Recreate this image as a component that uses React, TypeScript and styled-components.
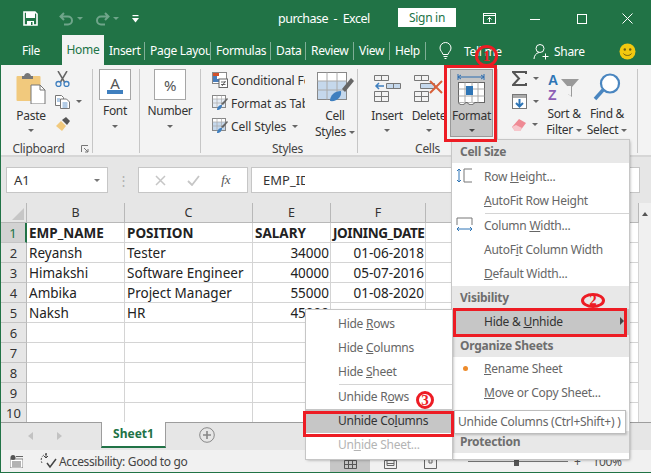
import React from 'react';
import styled, { createGlobalStyle } from 'styled-components';

const GlobalStyle = createGlobalStyle`
  html, body { margin: 0; padding: 0; background: #fff; }
  body { font-family: "Noto Sans", "Open Sans", sans-serif; font-size: 13px; color: #333; }
  svg { display: block; flex: none; }
`;

const Arrow = styled.span<{ $color?: string; $top?: number }>`
  display: inline-block;
  width: 0;
  height: 0;
  flex: none;
  margin-top: ${p => p.$top || 0}px;
  border-left: 3.5px solid transparent;
  border-right: 3.5px solid transparent;
  border-top: 3.5px solid ${p => p.$color || '#666'};
`;

/* title bar */
const Window = styled.div`
  position: relative;
  width: 651px;
  height: 473px;
  overflow: hidden;
  box-sizing: border-box;
  border-left: 1px solid #217346;
  border-bottom: 1px solid #217346;
  display: flex;
  flex-direction: column;
`;
const TitleBar = styled.div`
  height: 37px;
  margin-left: -1px;
  background: #217346;
  color: #fff;
  display: flex;
  align-items: center;
  flex: none;
`;
const TitleCell = styled.div<{ $w: number }>`
  width: ${p => p.$w}px;
  flex: none;
  display: flex;
  align-items: center;
  justify-content: center;
  gap: 3px;
`;
const DocTitle = styled.div`
  width: 125px;
  padding-left: 30px;
  box-sizing: border-box;
  font-size: 12.5px;
  letter-spacing: -0.5px;
  white-space: pre;
  flex: none;
`;
const SignIn = styled.div`
  width: 58px;
  height: 19px;
  margin: 0 3px 2px 25px;
  background: #fff;
  color: #217346;
  font-size: 12px;
  letter-spacing: -0.3px;
  line-height: 19px;
  text-align: center;
  flex: none;
`;

/* tabs */
const TabBar = styled.div`
  height: 28px;
  margin-left: -1px;
  background: #217346;
  display: flex;
  align-items: center;
  flex: none;
  color: #fff;
  font-size: 12px;
  letter-spacing: -0.3px;
`;
const Tab = styled.div<{ $w: number; $active?: boolean; $sep?: boolean }>`
  width: ${p => p.$w}px;
  box-sizing: border-box;
  flex: none;
  height: ${p => (p.$active ? '30px' : '18px')};
  margin-top: ${p => (p.$active ? '-2px' : '0')};
  line-height: ${p => (p.$active ? '30px' : '18px')};
  text-align: ${p => (p.$sep ? 'left' : 'center')};
  padding-left: ${p => (p.$sep ? '5px' : '0')};
  overflow: hidden;
  white-space: nowrap;
  background: ${p => (p.$active ? '#f3f3f3' : 'transparent')};
  color: ${p => (p.$active ? '#217346' : '#fff')};
  border-right: ${p => (p.$sep ? '1px solid #7fae96' : 'none')};
`;
const TabExtra = styled.div<{ $w: number }>`
  width: ${p => p.$w}px;
  flex: none;
  display: flex;
  align-items: center;
  gap: 5px;
  white-space: nowrap;
`;

/* ribbon */
const Ribbon = styled.div`
  height: 92px;
  background: #f3f3f3;
  border-bottom: 2px solid #d6d6d6;
  box-sizing: border-box;
  display: flex;
  flex: none;
  padding-top: 4px;
  font-size: 12px;
  letter-spacing: -0.3px;
`;
const Group = styled.div<{ $w: number; $last?: boolean }>`
  width: ${p => p.$w}px;
  height: 84px;
  flex: none;
  box-sizing: border-box;
  border-right: ${p => (p.$last ? 'none' : '1px solid #c6c6c6')};
  display: flex;
  flex-direction: column;
`;
const GroupBody = styled.div<{ $pad?: number; $gap?: number }>`
  flex: 1;
  display: flex;
  min-height: 0;
  padding-left: ${p => p.$pad || 0}px;
  gap: ${p => p.$gap || 0}px;
`;
const GroupLabel = styled.div<{ $left?: number; $right?: number }>`
  height: 14px;
  line-height: 20px;
  text-align: center;
  font-size: 12px;
  color: #444;
  position: relative;
  padding-left: ${p => p.$left || 0}px;
  padding-right: ${p => p.$right || 0}px;
`;
const Launcher = styled.span`
  position: absolute;
  right: 3px;
  top: 6px;
`;
const BigButton = styled.div<{ $w: number; $on?: boolean }>`
  width: ${p => p.$w}px;
  height: 68px;
  flex: none;
  box-sizing: border-box;
  background: ${p => (p.$on ? '#c6c6c6' : 'transparent')};
  border: 1px solid ${p => (p.$on ? '#9a9a9a' : 'transparent')};
  display: flex;
  flex-direction: column;
  align-items: center;
  line-height: 16px;
  text-align: center;
  white-space: nowrap;
  padding-top: 3px;
`;
const IconSlot = styled.div<{ $shift?: number }>`
  height: 30px;
  margin-bottom: 5px;
  margin-left: ${p => p.$shift || 0}px;
  display: flex;
  align-items: center;
  justify-content: center;
`;
const ClosedBox = styled.div`
  width: 32px;
  height: 31px;
  margin: -4px 0 3px;
  box-sizing: border-box;
  border: 1px solid #a6a6a6;
  background: #fff;
  display: flex;
  flex-direction: column;
  align-items: center;
  justify-content: center;
  font-size: 15px;
  color: #555;
`;
const ColorBar = styled.span`
  width: 16px;
  height: 4px;
  background: #3f7fbf;
`;
const FontLetter = styled.span`
  line-height: 14px;
`;
const SmallStack = styled.div<{ $w?: number }>`
  display: flex;
  flex-direction: column;
  gap: 8px;
  padding-top: 2px;
  ${p => (p.$w ? `width: ${p.$w}px;` : '')}
`;
const SmallRow = styled.div`
  display: flex;
  align-items: center;
  gap: 6px;
  height: 15px;
`;
const StyleList = styled.div`
  width: 93px;
  margin-right: 10px;
  padding-top: 1px;
  flex: none;
  display: flex;
  flex-direction: column;
  gap: 3px;
  overflow: hidden;
  font-size: 12px;
  letter-spacing: -0.1px;
`;
const StyleRow = styled.div`
  height: 20px;
  display: flex;
  align-items: center;
  gap: 3px;
  white-space: nowrap;
`;
const SmallArrow = styled(Arrow)`
  margin-left: 3px;
  vertical-align: 2px;
`;

/* formula bar */
const FormulaBar = styled.div`
  height: 46px;
  flex: none;
  background: #e6e6e6;
  box-sizing: border-box;
  padding: 10px 11px 0 5px;
  display: flex;
  align-items: flex-start;
`;
const InputBox = styled.div<{ $w?: number }>`
  height: 26px;
  box-sizing: border-box;
  border: 1px solid #c6c6c6;
  background: #fff;
  ${p => (p.$w ? `width: ${p.$w}px; flex: none;` : 'flex: 1;')}
  display: flex;
  align-items: center;
  font-size: 13px;
`;
const NameBox = styled(InputBox)`
  justify-content: space-between;
  padding: 0 7px;
`;
const FxBox = styled(InputBox)`
  justify-content: space-around;
  margin-right: 3px;
  padding: 0 6px;
`;
const FxLabel = styled.i`
  font-family: "Liberation Serif", serif;
  color: #555;
`;
const FormulaText = styled(InputBox)`
  padding-left: 11px;
`;
const FormulaValue = styled.span`
  width: 42px;
  overflow: hidden;
  white-space: nowrap;
`;
const Dots = styled.div`
  width: 30px;
  flex: none;
  height: 26px;
  color: #b0b0b0;
  font-size: 13px;
  line-height: 26px;
  text-align: center;
`;

/* sheet */
const SheetArea = styled.div`
  height: 219px;
  flex: none;
  display: flex;
  overflow: hidden;
  background: #fff;
`;
const Sheet = styled.div`
  flex: 1;
  display: grid;
  grid-template-columns: 26px 98px 128px 78px 95px 1fr;
  grid-auto-rows: 20px;
  font-size: 13.5px;
  color: #222;
  align-content: start;
`;
const Corner = styled.div`
  background: #e6e6e6;
  border-right: 1px solid #b8b8b8;
  border-bottom: 1px solid #b8b8b8;
  position: relative;
  &::after {
    content: '';
    position: absolute;
    right: 2px;
    bottom: 2px;
    border-left: 12px solid transparent;
    border-bottom: 12px solid #c6c6c6;
  }
`;
const ColHead = styled.div`
  background: #e6e6e6;
  border-right: 1px solid #b8b8b8;
  border-bottom: 1px solid #b8b8b8;
  text-align: center;
  line-height: 20px;
  font-size: 12.5px;
  color: #333;
`;
const RowHead = styled.div<{ $on?: boolean }>`
  background: ${p => (p.$on ? '#d2d2d2' : '#e6e6e6')};
  color: ${p => (p.$on ? '#217346' : '#333')};
  border-right: ${p => (p.$on ? '2px solid #217346' : '1px solid #b8b8b8')};
  border-bottom: 1px solid #c4c4c4;
  text-align: center;
  line-height: 21px;
  font-size: 13px;
  box-sizing: border-box;
`;
const Cell = styled.div<{ $bold?: boolean; $right?: boolean; $tight?: boolean }>`
  border-right: 1px solid #d4d4d4;
  border-bottom: 1px solid #d4d4d4;
  box-sizing: border-box;
  padding: 0 1px 0 2px;
  line-height: 21px;
  white-space: nowrap;
  overflow: hidden;
  font-weight: ${p => (p.$bold ? 700 : 400)};
  text-align: ${p => (p.$right ? 'right' : 'left')};
  letter-spacing: ${p => (p.$tight ? '-0.4px' : '0')};
`;
const ScrollBar = styled.div`
  width: 12px;
  flex: none;
  background: #f0f0f0;
  display: flex;
  justify-content: center;
  padding-top: 9px;
  box-sizing: border-box;
`;
const UpArrow = styled.span`
  width: 0;
  height: 0;
  border-left: 3px solid transparent;
  border-right: 3px solid transparent;
  border-bottom: 4px solid #555;
`;

/* sheet tabs + status */
const SheetTabs = styled.div`
  height: 28px;
  flex: none;
  background: #e6e6e6;
  border-top: 1px solid #9d9d9d;
  box-sizing: border-box;
  display: flex;
  align-items: flex-start;
`;
const NavArrows = styled.div`
  width: 100px;
  flex: none;
  height: 25px;
  display: flex;
  align-items: center;
  gap: 24px;
  padding-left: 27px;
  box-sizing: border-box;
`;
const NavArrow = styled.span<{ $left?: boolean }>`
  width: 0;
  height: 0;
  border-top: 4px solid transparent;
  border-bottom: 4px solid transparent;
  ${p => (p.$left ? 'border-right: 5px solid #c2c2c2;' : 'border-left: 5px solid #c2c2c2;')}
`;
const SheetTab = styled.div`
  width: 65px;
  height: 26px;
  margin-top: -1px;
  flex: none;
  box-sizing: border-box;
  background: #fff;
  border-left: 1px solid #9d9d9d;
  border-right: 1px solid #9d9d9d;
  border-bottom: 2px solid #217346;
  color: #217346;
  font-weight: 700;
  font-size: 12px;
  line-height: 24px;
  text-align: center;
`;
const AddSheet = styled.div`
  margin: 4px 0 0 33px;
`;
const StatusBar = styled.div`
  flex: 1;
  background: #f1f1f1;
  display: flex;
  align-items: center;
  font-size: 12px;
  letter-spacing: -0.35px;
  color: #444;
  padding-left: 9px;
`;
const StatusText = styled.div`
  display: flex;
  align-items: center;
  gap: 2px;
  margin-left: 17px;
  white-space: nowrap;
  width: 290px;
  flex: none;
`;
const ViewButton = styled.div<{ $on?: boolean }>`
  width: 40px;
  height: 21px;
  flex: none;
  background: ${p => (p.$on ? '#c6c6c6' : 'transparent')};
  display: flex;
  align-items: flex-end;
  justify-content: center;
  padding-bottom: 3px;
  box-sizing: border-box;
`;
const ZoomGroup = styled.div`
  display: flex;
  align-items: center;
  margin-left: 18px;
  font-size: 12px;
  color: #555;
`;
const Slider = styled.div`
  width: 100px;
  height: 1px;
  margin: 0 6px 0 0;
  background: #777;
  position: relative;
`;
const Thumb = styled.span`
  position: absolute;
  left: 46px;
  top: -4px;
  width: 5px;
  height: 9px;
  background: #555;
`;
const ZoomValue = styled.div`
  margin-left: 12px;
`;

/* menus */
const Menu = styled.div`
  position: absolute;
  background: #fff;
  box-shadow: 1px 1px 3px rgba(0, 0, 0, 0.35);
  outline: 1px solid #c6c6c6;
  overflow: hidden;
  font-size: 12px;
  letter-spacing: -0.25px;
  color: #666;
`;
const FormatMenu = styled(Menu)`
  left: 451px;
  top: 140px;
  width: 177px;
  height: 319px;
`;
const UnhideMenu = styled(Menu)`
  left: 305px;
  top: 310px;
  width: 146px;
  height: 149px;
  padding-top: 2px;
  box-sizing: border-box;
`;
const MenuHead = styled.div<{ $h?: number }>`
  height: ${p => p.$h || 22}px;
  line-height: ${p => p.$h || 22}px;
  background: #e8e8e8;
  font-weight: 700;
  padding-left: 8px;
  color: #6e6e6e;
`;
const MenuItem = styled.div<{ $on?: boolean; $off?: boolean; $h?: number }>`
  position: relative;
  height: ${p => p.$h || 24}px;
  line-height: ${p => p.$h || 24}px;
  padding-left: 32px;
  white-space: nowrap;
  background: ${p => (p.$on ? '#c6c6c6' : 'transparent')};
  color: ${p => (p.$off ? '#b4b4b4' : p.$on ? '#333' : '#666')};
`;
const MenuSep = styled.div`
  height: 1px;
  margin-left: 33px;
  background: #d4d4d4;
`;
const MenuGap = styled.div<{ $h: number }>`
  height: ${p => p.$h}px;
`;
const MenuIcon = styled.span`
  position: absolute;
  left: 4px;
  top: 3px;
`;
const SubArrow = styled.span`
  position: absolute;
  right: 5px;
  top: 8px;
  border-top: 4px solid transparent;
  border-bottom: 4px solid transparent;
  border-left: 4px solid #444;
`;
const Dot = styled.span`
  position: absolute;
  left: 11px;
  top: 9px;
  width: 5px;
  height: 5px;
  border-radius: 50%;
  background: #ed8b2b;
`;
const Tooltip = styled.div`
  position: absolute;
  left: 453px;
  top: 410px;
  width: 172px;
  height: 24px;
  box-sizing: border-box;
  background: #fff;
  border: 1px solid #bdbdbd;
  box-shadow: 1px 1px 2px rgba(0, 0, 0, 0.2);
  font-size: 12px;
  letter-spacing: -0.25px;
  line-height: 22px;
  padding-left: 3px;
  color: #666;
  white-space: nowrap;
  overflow: hidden;
`;

/* red call-outs drawn on top of the screenshot */
const RedBox = styled.div<{ $x: number; $y: number; $w: number; $h: number }>`
  position: absolute;
  left: ${p => p.$x}px;
  top: ${p => p.$y}px;
  width: ${p => p.$w}px;
  height: ${p => p.$h}px;
  box-sizing: border-box;
  border: 3px solid #ed1c24;
`;
const Badge = styled.div<{ $x: number; $y: number; $w: number; $h: number; $fill?: boolean }>`
  position: absolute;
  left: ${p => p.$x}px;
  top: ${p => p.$y}px;
  width: ${p => p.$w}px;
  height: ${p => p.$h}px;
  box-sizing: border-box;
  border: 3px solid #ed1c24;
  border-radius: 50%;
  background: ${p => (p.$fill ? '#fff' : 'transparent')};
  color: #ed1c24;
  font-family: "Liberation Serif", serif;
  font-weight: 700;
  font-size: 15px;
  line-height: ${p => p.$h - 6}px;
  text-align: center;
`;

const SaveIcon = () => (
  <svg width="15" height="15" viewBox="0 0 15 15">
    <path d="M1 1h11l2 2v11H1z" fill="none" stroke="#fff" strokeWidth="1.6" />
    <rect x="3" y="1" width="9" height="6" fill="#fff" />
    <rect x="4" y="10" width="7" height="4" fill="#fff" />
    <rect x="8" y="11" width="1.5" height="3" fill="#217346" />
  </svg>
);
const UndoIcon = ({ flip }: { flip?: boolean }) => (
  <svg width="15" height="14" viewBox="0 0 15 14">
    <path
      d="M5 1 1.5 4.5 5 8M2 4.5h7a4 4 0 0 1 0 8H5"
      fill="none"
      stroke="#6fa58a"
      strokeWidth="2"
      transform={flip ? 'matrix(-1 0 0 1 15 0)' : undefined}
    />
  </svg>
);
const QuickIcon = () => (
  <svg width="7" height="8" viewBox="0 0 7 8">
    <rect x="0.5" y="0" width="6" height="1.2" fill="#fff" />
    <path d="M0 3h7L3.5 7.5z" fill="#fff" />
  </svg>
);
const DisplayIcon = () => (
  <svg width="13" height="11" viewBox="0 0 13 11">
    <rect x="0.5" y="0.5" width="12" height="10" fill="none" stroke="#fff" />
    <path d="M0.5 2.5h12M6.5 9V4.500M4.500 6.500l2-2 2 2" fill="none" stroke="#fff" />
  </svg>
);
const MinIcon = () => (
  <svg width="12" height="10" viewBox="0 0 12 10">
    <path d="M1 5.500h10" stroke="#fff" />
  </svg>
);
const MaxIcon = () => (
  <svg width="10" height="10" viewBox="0 0 10 10">
    <rect x="0.5" y="0.5" width="9" height="9" fill="none" stroke="#fff" />
  </svg>
);
const CloseIcon = () => (
  <svg width="11" height="11" viewBox="0 0 11 11">
    <path d="M0.5 0.5l10 10M10.5 0.5l-10 10" stroke="#fff" />
  </svg>
);
const BulbIcon = () => (
  <svg width="13" height="18" viewBox="0 0 13 18">
    <path d="M4 12.500C3.500 10 1 9 1 6a5.500 5.500 0 0 1 11 0c0 3-2.500 4-3 6.500z" fill="none" stroke="#fff" />
    <path d="M4.500 14.500h4M5.500 16.500h2" stroke="#fff" />
  </svg>
);
const PersonIcon = () => (
  <svg width="16" height="17" viewBox="0 0 16 17">
    <circle cx="7" cy="5.500" r="4" fill="none" stroke="#fff" />
    <path d="M1 16c0-3 2-6 5-6.500M9.500 13.500h6M12.500 10.500v6" fill="none" stroke="#fff" />
  </svg>
);
const Smiley = () => (
  <svg width="17" height="17" viewBox="0 0 17 17">
    <circle cx="8.500" cy="8.500" r="8" fill="#f2c80f" />
    <circle cx="5.800" cy="6.500" r="1.200" fill="#6b5a10" />
    <circle cx="11.200" cy="6.500" r="1.200" fill="#6b5a10" />
    <path d="M4.500 10.500c1.500 2.600 6.500 2.600 8 0" fill="none" stroke="#6b5a10" />
  </svg>
);
const PasteIcon = () => (
  <svg width="30" height="31" viewBox="0 0 30 31">
    <rect x="0.500" y="3" width="24" height="25" rx="1" fill="#f1c97d" />
    <path d="M8 3c1-4 6-4 7 0h2v3H6V3z" fill="#777" />
    <path d="M15 12h9l5 5v14H15z" fill="#fff" stroke="#777" />
    <path d="M24 12v5h5" fill="none" stroke="#777" />
  </svg>
);
const ScissorsIcon = () => (
  <svg width="15" height="16" viewBox="0 0 15 16">
    <path d="M3 0l6.500 11M12 0L5.500 11" stroke="#666" strokeWidth="1.500" />
    <circle cx="3.500" cy="13" r="2.500" fill="none" stroke="#3f7fbf" strokeWidth="1.300" />
    <circle cx="11.500" cy="13" r="2.500" fill="none" stroke="#3f7fbf" strokeWidth="1.300" />
  </svg>
);
const CopyIcon = () => (
  <svg width="15" height="14" viewBox="0 0 15 14">
    <path d="M0.500 0.500h6l2 2v8h-8z" fill="#fff" stroke="#777" />
    <path d="M5.500 4h6l3 3v6.500h-9z" fill="#fff" stroke="#777" />
    <path d="M7.500 8h5M7.500 10h5M7.500 12h5M2 4h3M2 6h3" stroke="#3f7fbf" strokeWidth="0.800" />
  </svg>
);
const BrushIcon = () => (
  <svg width="16" height="15" viewBox="0 0 16 15">
    <path d="M1 9l5-5 5 5-4 5z" fill="#f1c97d" />
    <path d="M7 3l4-3 4 4-3 4z" fill="#555" />
  </svg>
);
const Launch = () => (
  <svg width="8" height="8" viewBox="0 0 8 8">
    <path d="M0.500 7V0.500H7M3 3l4 4M7 4v3H4" fill="none" stroke="#777" />
  </svg>
);
const CondIcon = () => (
  <svg width="16" height="16" viewBox="0 0 16 16">
    <rect x="0.500" y="0.500" width="14" height="11" fill="#fff" stroke="#888" />
    <rect x="1" y="1" width="6" height="3" fill="#d2502a" />
    <rect x="1" y="4" width="4" height="3" fill="#4a7ebb" />
    <rect x="1" y="7" width="6" height="3" fill="#4a7ebb" />
    <rect x="7" y="7" width="8.500" height="8.500" fill="#fff" stroke="#666" />
    <path d="M9 10h4.500M9 12.500h4.500M10 14l3.500-5" stroke="#444" strokeWidth="0.800" />
  </svg>
);
const TableIcon = ({ fill }: { fill: string }) => (
  <svg width="16" height="16" viewBox="0 0 16 16">
    <rect x="0.500" y="0.500" width="13" height="12" fill="#fff" stroke="#888" />
    <rect x="1" y="4" width="12" height="8" fill={fill} />
    <path d="M0.500 4h13M0.500 8h13M5 0.500v12M9.500 0.500v12" stroke="#aaa" strokeWidth="0.700" />
    <path d="M9 9l6-6 1 1-5 6z" fill="#666" />
    <path d="M5 15c0-3 2-5 5-5 0 3-2 5-5 5z" fill="#3f7fbf" />
  </svg>
);
const CellStylesIcon = () => (
  <svg width="37" height="32" viewBox="0 0 37 32">
    <rect x="0.500" y="0.500" width="29" height="27" fill="#fff" stroke="#888" />
    <rect x="1" y="9" width="28" height="18" fill="#c5d8ec" />
    <path d="M0.500 9h29M0.500 18h29M10 0.500v27M20 0.500v27" stroke="#aaa" />
    <path d="M25 17L34 6l3 3-9 11z" fill="#666" />
    <path d="M13 29c0-6 5-10 11-10 1 6-4 11-11 10z" fill="#3f7fbf" />
  </svg>
);
const InsertIcon = () => (
  <svg width="27" height="27" viewBox="0 0 27 27">
    <path d="M0.500 0.500h14v5h-14zM7.500 0.500v5M0.500 16.500h14v10h-14zM0.500 21.500h14M7.500 16.500v10" fill="none" stroke="#777" />
    <path d="M12.500 8.500h14v5h-14zM19.500 8.500v5" fill="#c5d8ec" stroke="#777" />
    <path d="M10 11H2M5 8l-3 3 3 3" fill="none" stroke="#3f7fbf" strokeWidth="1.500" />
  </svg>
);
const DeleteIcon = () => (
  <svg width="30" height="27" viewBox="0 0 30 27">
    <path d="M0.500 0.500h14v5h-14zM7.500 0.500v5M0.500 16.500h14v10h-14zM0.500 21.500h14M7.500 16.500v10" fill="none" stroke="#777" />
    <path d="M6.500 8.500h14v5h-14z" fill="#c5d8ec" stroke="#777" />
    <path d="M16 6l12 12M28 6L16 18" stroke="#d8603a" strokeWidth="2" />
  </svg>
);
const FormatIcon = () => (
  <svg width="30" height="33" viewBox="0 0 30 33">
    <path d="M1 5h26M1 2v6M27 2v6M4 3L1 5l3 2M24 3l3 2-3 2" fill="none" stroke="#2b6cb0" />
    <rect x="1.500" y="10.500" width="26" height="20" fill="#fff" stroke="#666" />
    <path d="M8 10.500v20M21 10.500v20M1.500 17h26M1.500 24h26M15 10.500v20" stroke="#aaa" />
    <rect x="9" y="14" width="7" height="9" fill="#2e75b6" />
    <path d="M1 30.500c3 3 5 3 8 0M10 30.500c3 3 5 3 8 0" fill="#fff" stroke="#666" />
  </svg>
);
const SigmaIcon = () => (
  <svg width="15" height="15" viewBox="0 0 15 15">
    <path d="M14 3V1H1l6 6.500L1 14h13v-2" fill="none" stroke="#555" strokeWidth="2" />
  </svg>
);
const FillIcon = () => (
  <svg width="15" height="15" viewBox="0 0 15 15">
    <rect x="0.500" y="0.500" width="14" height="14" fill="#fff" stroke="#777" />
    <rect x="1" y="1" width="13" height="3" fill="#aaa" />
    <path d="M7.500 5v7M4 9l3.500 3.500L11 9" fill="none" stroke="#2e75b6" strokeWidth="2" />
  </svg>
);
const EraserIcon = () => (
  <svg width="14" height="12" viewBox="0 0 14 12">
    <path d="M0 8l7-8 7 4-6 8H3z" fill="#ef8a94" />
    <path d="M0 8l3 4h5l2-3-6-3z" fill="#f7c6cb" />
  </svg>
);
const SortIcon = () => (
  <svg width="32" height="28" viewBox="0 0 32 28">
    <text x="0" y="12" fontFamily="Liberation Sans, sans-serif" fontWeight="700" fontSize="14" fill="#2e75b6">A</text>
    <text x="0" y="27" fontFamily="Liberation Sans, sans-serif" fontWeight="700" fontSize="14" fill="#8e5fb5">Z</text>
    <path d="M13 6h18l-7 8v10l-4-3v-7z" fill="#9a9a9a" />
    <path d="M19 13l1 8 3 2V13z" fill="#f3f3f3" />
  </svg>
);
const FindIcon = () => (
  <svg width="28" height="28" viewBox="0 0 28 28">
    <circle cx="17" cy="10.500" r="9" fill="#fff" stroke="#4a86c0" strokeWidth="2.200" />
    <path d="M10 17L2 26" stroke="#4a86c0" strokeWidth="3.500" />
  </svg>
);
const RowHeightIcon = () => (
  <svg width="17" height="15" viewBox="0 0 17 15">
    <path d="M3 1v13M1 3l2-2 2 2M1 12l2 2 2-2" fill="none" stroke="#2e75b6" />
    <path d="M16 1H8v13h8" fill="none" stroke="#777" />
  </svg>
);
const ColWidthIcon = () => (
  <svg width="17" height="15" viewBox="0 0 17 15">
    <path d="M1 8V1h15v7" fill="none" stroke="#777" />
    <path d="M1 12h15M3 10l-2 2 2 2M14 10l2 2-2 2" fill="none" stroke="#2e75b6" />
  </svg>
);
const CancelIcon = () => (
  <svg width="11" height="11" viewBox="0 0 11 11">
    <path d="M1 1l9 9M10 1l-9 9" stroke="#c6c6c6" strokeWidth="1.500" />
  </svg>
);
const CheckIcon = () => (
  <svg width="13" height="11" viewBox="0 0 13 11">
    <path d="M1 6l4 4 7-9" fill="none" stroke="#c6c6c6" strokeWidth="1.800" />
  </svg>
);
const PlusCircle = () => (
  <svg width="16" height="16" viewBox="0 0 16 16">
    <circle cx="8" cy="8" r="7.300" fill="none" stroke="#888" />
    <path d="M8 4v8M4 8h8" stroke="#888" strokeWidth="1.600" />
  </svg>
);
const MacroIcon = () => (
  <svg width="13" height="13" viewBox="0 0 13 13">
    <rect x="0" y="4" width="13" height="9" fill="#fff" stroke="#666" strokeWidth="0.800" />
    <circle cx="3" cy="2.500" r="2.500" fill="#555" />
    <path d="M6 1.500h7M2 7h9M2 9h9M2 11h9" stroke="#666" />
  </svg>
);
const AccessIcon = () => (
  <svg width="17" height="16" viewBox="0 0 17 16">
    <path d="M7 1a6 6 0 0 0-5 9" fill="none" stroke="#444" strokeDasharray="2 1.500" />
    <path d="M6 0v5M4 3l2 2 2-2" fill="none" stroke="#444" />
    <path d="M7 10l3 4 6-8" fill="none" stroke="#444" strokeWidth="1.500" />
  </svg>
);
const NormalView = () => (
  <svg width="13" height="9" viewBox="0 0 13 9">
    <path d="M0.500 0.500h12v8h-12zM0.500 4.500h12M4.500 0.500v8M8.500 0.500v8" fill="none" stroke="#555" />
  </svg>
);
const PageView = () => (
  <svg width="13" height="9" viewBox="0 0 13 9">
    <path d="M0.500 0.500h12v8h-12zM3 0.500v5h7v-5M3 3.500h7" fill="none" stroke="#666" />
  </svg>
);
const BreakView = () => (
  <svg width="13" height="9" viewBox="0 0 13 9">
    <path d="M0.500 0v8.500h12V0M5 0v3h3V0" fill="none" stroke="#666" />
  </svg>
);

const rows: [string, string, string, string][] = [
  ['Reyansh', 'Tester', '34000', '01-06-2018'],
  ['Himakshi', 'Software Engineer', '40000', '05-07-2016'],
  ['Ambika', 'Project Manager', '55000', '01-08-2020'],
  ['Naksh', 'HR', '45000', ''],
];

const App: React.FC = () => {
  const emptyRows = [6, 7, 8, 9, 10];
  return (
    <>
      <GlobalStyle />
      <Window>
        <TitleBar>
          <TitleCell $w={22} />
          <TitleCell $w={16}><SaveIcon /></TitleCell>
          <TitleCell $w={21} />
          <TitleCell $w={24}><UndoIcon /><Arrow $color="#6fa58a" /></TitleCell>
          <TitleCell $w={12} />
          <TitleCell $w={24}><UndoIcon flip /><Arrow $color="#6fa58a" /></TitleCell>
          <TitleCell $w={12} />
          <TitleCell $w={8}><QuickIcon /></TitleCell>
          <TitleCell $w={109} />
          <DocTitle>purchase  -  Excel</DocTitle>
          <SignIn>Sign in</SignIn>
          <TitleCell $w={60}><DisplayIcon /></TitleCell>
          <TitleCell $w={32}><MinIcon /></TitleCell>
          <TitleCell $w={61}><MaxIcon /></TitleCell>
          <TitleCell $w={31}><CloseIcon /></TitleCell>
        </TitleBar>

        <TabBar>
          <Tab $w={62}>File</Tab>
          <Tab $w={42} $active>Home</Tab>
          <Tab $w={41} $sep>Insert</Tab>
          <Tab $w={66} $sep>Page Layout</Tab>
          <Tab $w={60} $sep>Formulas</Tab>
          <Tab $w={35} $sep>Data</Tab>
          <Tab $w={48} $sep>Review</Tab>
          <Tab $w={36} $sep>View</Tab>
          <Tab $w={36} $sep>Help</Tab>
          <TabExtra $w={13} />
          <TabExtra $w={25}><BulbIcon /></TabExtra>
          <TabExtra $w={69}>Tell me</TabExtra>
          <TabExtra $w={86}><PersonIcon />Share</TabExtra>
          <TabExtra $w={20}><Smiley /></TabExtra>
        </TabBar>

        <Ribbon>
          <Group $w={92}>
            <GroupBody $pad={9} $gap={3}>
              <BigButton $w={42}>
                <IconSlot><PasteIcon /></IconSlot>
                Paste
                <Arrow $top={5} />
              </BigButton>
              <SmallStack>
                <SmallRow><ScissorsIcon /></SmallRow>
                <SmallRow><CopyIcon /><Arrow /></SmallRow>
                <SmallRow><BrushIcon /></SmallRow>
              </SmallStack>
            </GroupBody>
            <GroupLabel $right={16}>
              Clipboard
              <Launcher><Launch /></Launcher>
            </GroupLabel>
          </Group>
          <Group $w={47}>
            <GroupBody $pad={4}>
              <BigButton $w={36}>
                <ClosedBox>
                  <FontLetter>A</FontLetter>
                  <ColorBar />
                </ClosedBox>
                Font
                <Arrow $top={6} />
              </BigButton>
            </GroupBody>
            <GroupLabel />
          </Group>
          <Group $w={61}>
            <GroupBody $pad={6}>
              <BigButton $w={48}>
                <ClosedBox>%</ClosedBox>
                Number
                <Arrow $top={6} />
              </BigButton>
            </GroupBody>
            <GroupLabel />
          </Group>
          <Group $w={157}>
            <GroupBody $pad={11}>
              <StyleList>
                <StyleRow><CondIcon />Conditional Formatting</StyleRow>
                <StyleRow><TableIcon fill="#e4ecf5" />Format as Table</StyleRow>
                <StyleRow><TableIcon fill="#c5d8ec" />Cell Styles<SmallArrow /></StyleRow>
              </StyleList>
              <BigButton $w={40}>
                <IconSlot $shift={1}><CellStylesIcon /></IconSlot>
                Cell
                <span>Styles<SmallArrow /></span>
              </BigButton>
            </GroupBody>
            <GroupLabel $left={17}>Styles</GroupLabel>
          </Group>
          <Group $w={140}>
            <GroupBody $pad={8}>
              <BigButton $w={42}>
                <IconSlot><InsertIcon /></IconSlot>
                Insert
                <Arrow $top={5} />
              </BigButton>
              <BigButton $w={42}>
                <IconSlot><DeleteIcon /></IconSlot>
                Delete
                <Arrow $top={5} />
              </BigButton>
              <BigButton $w={43} $on>
                <IconSlot><FormatIcon /></IconSlot>
                Format
                <Arrow $color="#444" $top={5} />
              </BigButton>
            </GroupBody>
            <GroupLabel>Cells</GroupLabel>
          </Group>
          <Group $w={140}>
            <GroupBody $pad={14} $gap={1}>
              <SmallStack $w={30}>
                <SmallRow><SigmaIcon /><Arrow /></SmallRow>
                <SmallRow><FillIcon /><Arrow /></SmallRow>
                <SmallRow><EraserIcon /><Arrow /></SmallRow>
              </SmallStack>
              <BigButton $w={42}>
                <IconSlot><SortIcon /></IconSlot>
                Sort &amp;
                <span>Filter<SmallArrow /></span>
              </BigButton>
              <BigButton $w={42}>
                <IconSlot><FindIcon /></IconSlot>
                Find &amp;
                <span>Select<SmallArrow /></span>
              </BigButton>
            </GroupBody>
            <GroupLabel />
          </Group>
        </Ribbon>

        <FormulaBar>
          <NameBox $w={102}>A1<Arrow $color="#777" /></NameBox>
          <Dots>⋮</Dots>
          <FxBox $w={110}>
            <CancelIcon />
            <CheckIcon />
            <FxLabel>fx</FxLabel>
          </FxBox>
          <FormulaText><FormulaValue>EMP_ID</FormulaValue></FormulaText>
        </FormulaBar>

        <SheetArea>
          <Sheet>
            <Corner />
            <ColHead>B</ColHead>
            <ColHead>C</ColHead>
            <ColHead>E</ColHead>
            <ColHead>F</ColHead>
            <ColHead />

            <RowHead $on>1</RowHead>
            <Cell $bold>EMP_NAME</Cell>
            <Cell $bold>POSITION</Cell>
            <Cell $bold>SALARY</Cell>
            <Cell $bold $tight>JOINING_DATE</Cell>
            <Cell />

            {rows.map((r, i) => (
              <React.Fragment key={r[0]}>
                <RowHead>{i + 2}</RowHead>
                <Cell>{r[0]}</Cell>
                <Cell>{r[1]}</Cell>
                <Cell $right>{r[2]}</Cell>
                <Cell $right>{r[3]}</Cell>
                <Cell />
              </React.Fragment>
            ))}

            {emptyRows.map(n => (
              <React.Fragment key={n}>
                <RowHead>{n}</RowHead>
                <Cell />
                <Cell />
                <Cell />
                <Cell />
                <Cell />
              </React.Fragment>
            ))}
          </Sheet>
          <ScrollBar><UpArrow /></ScrollBar>
        </SheetArea>

        <SheetTabs>
          <NavArrows>
            <NavArrow $left />
            <NavArrow />
          </NavArrows>
          <SheetTab>Sheet1</SheetTab>
          <AddSheet><PlusCircle /></AddSheet>
        </SheetTabs>

        <StatusBar>
          <MacroIcon />
          <StatusText>
            <AccessIcon />
            Accessibility: Good to go
          </StatusText>
          <ViewButton $on><NormalView /></ViewButton>
          <ViewButton><PageView /></ViewButton>
          <ViewButton><BreakView /></ViewButton>
          <ZoomGroup>
            <Slider><Thumb /></Slider>
            +
            <ZoomValue>100%</ZoomValue>
          </ZoomGroup>
        </StatusBar>

        <FormatMenu>
          <MenuHead $h={23}>Cell Size</MenuHead>
          <MenuGap $h={2} />
          <MenuItem><MenuIcon><RowHeightIcon /></MenuIcon>Row <u>H</u>eight...</MenuItem>
          <MenuItem><u>A</u>utoFit Row Height</MenuItem>
          <MenuSep />
          <MenuItem><MenuIcon><ColWidthIcon /></MenuIcon>Column <u>W</u>idth...</MenuItem>
          <MenuItem>AutoF<u>i</u>t Column Width</MenuItem>
          <MenuItem><u>D</u>efault Width...</MenuItem>
          <MenuHead $h={23}>Visibility</MenuHead>
          <MenuItem $on $h={26}>Hide &amp; <u>U</u>nhide<SubArrow /></MenuItem>
          <MenuHead>Organize Sheets</MenuHead>
          <MenuItem><Dot /><u>R</u>ename Sheet</MenuItem>
          <MenuItem><u>M</u>ove or Copy Sheet...</MenuItem>
          <MenuGap $h={26} />
          <MenuHead>Protection</MenuHead>
        </FormatMenu>

        <UnhideMenu>
          <MenuItem>Hide <u>R</u>ows</MenuItem>
          <MenuItem>Hide <u>C</u>olumns</MenuItem>
          <MenuItem>Hide <u>S</u>heet</MenuItem>
          <MenuSep />
          <MenuItem>Unhide R<u>o</u>ws</MenuItem>
          <MenuItem $on>Unhide Co<u>l</u>umns</MenuItem>
          <MenuItem $off>Un<u>h</u>ide Sheet...</MenuItem>
        </UnhideMenu>

        <Tooltip>Unhide Columns (Ctrl+Shift+) )</Tooltip>

        <RedBox $x={443} $y={65} $w={53} $h={77} />
        <RedBox $x={452} $y={308} $w={174} $h={29} />
        <RedBox $x={302} $y={411} $w={151} $h={26} />
        <Badge $x={474} $y={45} $w={23} $h={22}>1</Badge>
        <Badge $x={580} $y={293} $w={24} $h={15}>2</Badge>
        <Badge $x={415} $y={391} $w={18} $h={18} $fill>3</Badge>
      </Window>
    </>
  );
};

export default App;
